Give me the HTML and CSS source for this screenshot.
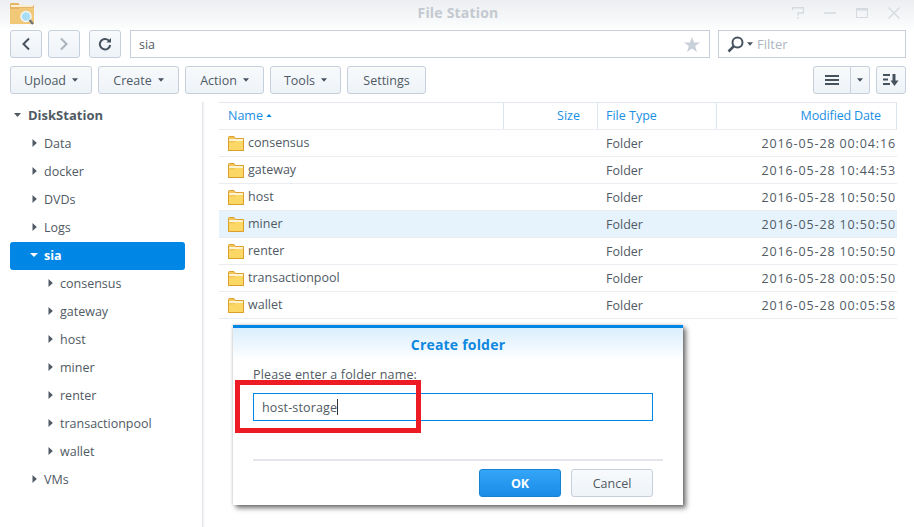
FILE: index.html
```html
<!DOCTYPE html>
<html lang="en">
<head>
<meta charset="utf-8">
<title>File Station</title>
<link rel="stylesheet" href="styles.css">
</head>
<body>
<svg class="defs" width="0" height="0" aria-hidden="true">
  <defs>
    <symbol id="folder" viewBox="0 0 16 15">
      <path d="M0.5 14.5V1.5Q0.5 0.5 1.5 0.5H6L7.5 2.5H15.5V14.5Z" fill="#f3c45a" stroke="#dc9f2a"/>
      <rect x="1" y="3" width="14" height="2" fill="#fdf3d3"/>
      <path d="M1 14V6.5L6 6.5L7.5 5H15V14Z" fill="#fbd765"/>
      <path d="M0.5 14.5H15.5" stroke="#dc9f2a"/>
    </symbol>
    <symbol id="caret" viewBox="0 0 7 4"><path d="M0 0H7L3.5 4Z" fill="currentColor"/></symbol>
    <symbol id="tri" viewBox="0 0 5 8"><path d="M0.500 0L4.800 4L0.500 8Z" fill="currentColor"/></symbol>
  </defs>
</svg>
<div class="app">
  <header class="titlebar">
    <svg class="app-icon" viewBox="0 0 24 24" width="24" height="24">
      <path d="M0 21V2Q0 1 1 1H8L10 3H23Q24 3 24 4V21Q24 22 23 22H1Q0 22 0 21Z" fill="#e5b565"/>
      <rect x="1" y="3" width="22" height="2" fill="#fbeed2"/>
      <path d="M0 21V7L9 7L10 6H24V21Q24 22 23 22H1Q0 22 0 21Z" fill="#f0c878"/>
      <circle cx="16" cy="14.500" r="5" fill="#a9def5" stroke="#f4f7f9" stroke-width="1.500"/>
      <path d="M19.500 18L23 22" stroke="#6b7480" stroke-width="2.200"/>
    </svg>
    <h1 class="title">File Station</h1>
    <div class="win-controls">
      <svg width="12" height="12" viewBox="0 0 12 12"><path d="M0.500 3V0.700H11.500V6H6V8.500M6 10V12" fill="none" stroke="#d5dae0" stroke-width="1.400"/></svg>
      <svg width="12" height="12" viewBox="0 0 12 12"><path d="M0 6H12" stroke="#d5dae0" stroke-width="1.500"/></svg>
      <svg width="12" height="12" viewBox="0 0 12 12"><rect x="0.500" y="1.500" width="11" height="9" fill="none" stroke="#d5dae0"/><rect x="0" y="1" width="12" height="2.500" fill="#d5dae0"/></svg>
      <svg width="12" height="12" viewBox="0 0 12 12"><path d="M0.500 0.500L11.500 11.500M11.500 0.500L0.500 11.500" stroke="#d5dae0" stroke-width="1.300"/></svg>
    </div>
  </header>

  <div class="toolbar nav-row">
    <button class="btn icon-btn"><svg width="10" height="14" viewBox="0 0 10 14"><path d="M8 1.500L2.500 7L8 12.500" fill="none" stroke="#47525f" stroke-width="2"/></svg></button>
    <button class="btn icon-btn"><svg width="10" height="14" viewBox="0 0 10 14"><path d="M2 1.500L7.500 7L2 12.500" fill="none" stroke="#aab2bb" stroke-width="2"/></svg></button>
    <button class="btn icon-btn refresh"><svg width="14" height="14" viewBox="0 0 14 14"><path d="M11.500 4.500A5.200 5.200 0 1 0 12.200 8" fill="none" stroke="#47525f" stroke-width="2"/><path d="M8.500 5.500H13V1Z" fill="#47525f"/></svg></button>
    <div class="path-field"><span>sia</span>
      <svg class="star" width="16" height="15" viewBox="0 0 16 15"><path d="M8 0L10 5.500H16L11.200 9L13 15L8 11.400L3 15L4.800 9L0 5.500H6Z" fill="#c8d0da"/></svg>
    </div>
    <div class="filter-field">
      <svg width="17" height="17" viewBox="0 0 17 17"><circle cx="10.500" cy="6.500" r="5" fill="none" stroke="#47525f" stroke-width="2"/><path d="M7 10L1.500 15.500" stroke="#47525f" stroke-width="2.500"/></svg>
      <svg class="c" width="6" height="4"><use href="#caret"/></svg>
      <span>Filter</span>
    </div>
  </div>

  <div class="toolbar action-row">
    <button class="btn txt upload">Upload<svg class="c" width="6" height="4"><use href="#caret"/></svg></button>
    <button class="btn txt create">Create<svg class="c" width="6" height="4"><use href="#caret"/></svg></button>
    <button class="btn txt action">Action<svg class="c" width="6" height="4"><use href="#caret"/></svg></button>
    <button class="btn txt tools">Tools<svg class="c" width="6" height="4"><use href="#caret"/></svg></button>
    <button class="btn txt settings">Settings</button>
    <div class="view-group">
      <button class="btn list-btn"><svg width="14" height="10" viewBox="0 0 14 10"><path d="M0 1H14M0 5H14M0 9H14" stroke="#47525f" stroke-width="2"/></svg></button>
      <button class="btn drop-btn"><svg class="c" width="6" height="4"><use href="#caret"/></svg></button>
    </div>
    <button class="btn sort-btn"><svg width="16" height="14" viewBox="0 0 16 14"><path d="M0 2H7M0 6.500H5M0 11H7" stroke="#47525f" stroke-width="2"/><path d="M11 1V8" stroke="#47525f" stroke-width="3"/><path d="M8 7.500H16L12 13Z" fill="#47525f" transform="translate(-0.500 0)"/></svg></button>
  </div>

  <div class="main">
    <nav class="tree">
      <div class="node root"><svg class="caret-i" width="7" height="4"><use href="#caret"/></svg>DiskStation</div>
      <div class="node l1"><svg class="tri" width="5" height="8"><use href="#tri"/></svg>Data</div>
      <div class="node l1"><svg class="tri" width="5" height="8"><use href="#tri"/></svg>docker</div>
      <div class="node l1"><svg class="tri" width="5" height="8"><use href="#tri"/></svg>DVDs</div>
      <div class="node l1"><svg class="tri" width="5" height="8"><use href="#tri"/></svg>Logs</div>
      <div class="node l1 selected"><svg class="caret-i" width="8" height="4" viewBox="0 0 7 4" preserveAspectRatio="none"><use href="#caret"/></svg>sia</div>
      <div class="node l2"><svg class="tri" width="5" height="8"><use href="#tri"/></svg>consensus</div>
      <div class="node l2"><svg class="tri" width="5" height="8"><use href="#tri"/></svg>gateway</div>
      <div class="node l2"><svg class="tri" width="5" height="8"><use href="#tri"/></svg>host</div>
      <div class="node l2"><svg class="tri" width="5" height="8"><use href="#tri"/></svg>miner</div>
      <div class="node l2"><svg class="tri" width="5" height="8"><use href="#tri"/></svg>renter</div>
      <div class="node l2"><svg class="tri" width="5" height="8"><use href="#tri"/></svg>transactionpool</div>
      <div class="node l2"><svg class="tri" width="5" height="8"><use href="#tri"/></svg>wallet</div>
      <div class="node l1"><svg class="tri" width="5" height="8"><use href="#tri"/></svg>VMs</div>
    </nav>
    <section class="grid">
      <div class="row head">
        <div class="col name">Name<svg class="c" width="6" height="3" viewBox="0 0 7 4"><path d="M0 4H7L3.500 0Z" fill="#0086e5"/></svg></div>
        <div class="col size">Size</div>
        <div class="col type">File Type</div>
        <div class="col date">Modified Date</div>
      </div>
      <div class="row"><div class="col name"><svg class="folder" width="16" height="15"><use href="#folder"/></svg>consensus</div><div class="col size"></div><div class="col type">Folder</div><div class="col date">2016-05-28 00:04:16</div></div>
      <div class="row"><div class="col name"><svg class="folder" width="16" height="15"><use href="#folder"/></svg>gateway</div><div class="col size"></div><div class="col type">Folder</div><div class="col date">2016-05-28 10:44:53</div></div>
      <div class="row"><div class="col name"><svg class="folder" width="16" height="15"><use href="#folder"/></svg>host</div><div class="col size"></div><div class="col type">Folder</div><div class="col date">2016-05-28 10:50:50</div></div>
      <div class="row hover"><div class="col name"><svg class="folder" width="16" height="15"><use href="#folder"/></svg>miner</div><div class="col size"></div><div class="col type">Folder</div><div class="col date">2016-05-28 10:50:50</div></div>
      <div class="row"><div class="col name"><svg class="folder" width="16" height="15"><use href="#folder"/></svg>renter</div><div class="col size"></div><div class="col type">Folder</div><div class="col date">2016-05-28 10:50:50</div></div>
      <div class="row"><div class="col name"><svg class="folder" width="16" height="15"><use href="#folder"/></svg>transactionpool</div><div class="col size"></div><div class="col type">Folder</div><div class="col date">2016-05-28 00:05:50</div></div>
      <div class="row"><div class="col name"><svg class="folder" width="16" height="15"><use href="#folder"/></svg>wallet</div><div class="col size"></div><div class="col type">Folder</div><div class="col date">2016-05-28 00:05:58</div></div>
    </section>
  </div>

  <div class="dialog">
    <div class="dialog-head">Create folder</div>
    <div class="dialog-body">
      <div class="label">Please enter a folder name:</div>
      <div class="input"><span>host-storage</span><i class="cursor"></i></div>
      <div class="sep"></div>
      <div class="dialog-actions">
        <button class="dbtn ok">OK</button>
        <button class="dbtn cancel">Cancel</button>
      </div>
    </div>
  </div>
  <div class="annotation"></div>
</div>
</body>
</html>
```

FILE: styles.css
```css
* { box-sizing: border-box; }
html, body { margin: 0; padding: 0; height: 100%; background: #fff; overflow: hidden; }
body { font-family: "Open Sans", "DejaVu Sans", sans-serif; font-size: 12px; color: #505a64; }
.defs { position: absolute; }
.app { position: relative; width: 914px; height: 527px; overflow: hidden; background: #fff; }

.titlebar { display: flex; align-items: center; height: 30px; padding: 0 14px 0 10px; background: linear-gradient(#eceef1, #fbfcfc 90%, #fff); position: relative; }
.app-icon { flex: none; margin-top: -2px; }
.title { position: absolute; left: 2px; right: 0; top: 5px; margin: 0; text-align: center; font-size: 14px; line-height: 16px; letter-spacing: 0.200px; font-weight: 700; color: #c3c9d0; }
.win-controls { margin-left: auto; display: flex; align-items: center; gap: 20px; margin-top: -4px; }

.toolbar { display: flex; align-items: stretch; height: 28px; padding: 0 8px 0 10px; }
.nav-row { gap: 6px; }
.action-row { margin-top: 8px; gap: 6px; }

.btn { margin: 0; padding: 0; height: 28px; border: 1px solid #c5d0dc; border-radius: 3px; background: linear-gradient(#f8fafc, #eef3f8); font: inherit; font-size: 12.500px; color: #505a64; display: flex; align-items: center; justify-content: center; }
.icon-btn { width: 32px; }
.refresh { margin-left: 3px; }
.path-field { width: 580px; margin-left: 3px; height: 28px; border: 1px solid #c5d0dc; background: #fff; display: flex; align-items: center; justify-content: space-between; padding: 0 9px 0 8px; font-size: 12.500px; }
.filter-field { width: 188px; margin-left: 2px; height: 28px; border: 1px solid #c5d0dc; background: #fff; display: flex; align-items: center; padding: 0 0 0 8px; color: #aeb6bf; font-size: 13px; }
.filter-field .c { margin: 0 4px 0 3px; color: #47525f; }
.c { flex: none; }
.txt .c { margin-left: 6px; color: #47525f; }
.upload { width: 82px; }
.create { width: 81px; }
.action { width: 79px; }
.tools { width: 71px; }
.settings { width: 79px; }
.view-group { display: flex; margin-left: auto; }
.list-btn { width: 38px; border-radius: 3px 0 0 3px; }
.drop-btn { width: 19px; border-left: 0; border-radius: 0 3px 3px 0; color: #47525f; }
.sort-btn { width: 30px; }

.main { display: flex; margin-top: 8px; height: 425px; }
.tree { width: 203px; flex: none; border-right: 1px solid #e3e6ea; box-shadow: 1px 0 1px #f0f2f4; padding: 0 17px 0 10px; }
.node { display: flex; align-items: center; height: 28px; padding-bottom: 2px; font-size: 12.500px; white-space: nowrap; }
.root { font-weight: 700; padding-left: 4px; font-size: 13px; }
.root .caret-i { margin-right: 7px; color: #505a64; }
.l1 { padding-left: 22px; }
.l2 { padding-left: 38px; }
.tri { flex: none; margin-right: 7px; color: #505a64; }
.selected { background: #0086e5; color: #fff; font-weight: 700; border-radius: 3px; padding-left: 20px; }
.selected .caret-i { margin-right: 6px; color: #fff; }

.grid { margin-left: 16px; width: 678px; flex: none; border-top: 1px solid #e3e8ee; align-self: flex-start; }
.row { display: flex; height: 27px; border-bottom: 1px solid #e9ecf0; font-size: 12.500px; align-items: center; }
.head { color: #1a8fe3; }
.head .col { height: 100%; border-right: 1px solid #dde5ee; padding-bottom: 2px; }
.col { display: flex; align-items: center; height: 100%; white-space: nowrap; }
.name { width: 285px; padding-left: 9px; }
.row .name { padding-bottom: 2px; }
.name .c { margin-left: 3px; }
.size { width: 94px; justify-content: flex-end; padding-right: 17px; }
.type { width: 119px; padding-left: 8px; }
.date { width: 180px; justify-content: flex-end; padding-right: 1px; letter-spacing: 0.870px; }
.head .date { letter-spacing: -0.150px; padding-right: 15px; }
.hover { background: #e6f3fd; }
.folder { flex: none; margin-right: 4px; margin-top: 2px; }

.dialog { position: absolute; left: 233px; top: 325px; width: 450px; height: 180px; background: #fff; border-top: 3px solid #0086e5; box-shadow: 3px 3px 5px rgba(0,0,0,.55), 0 0 3px rgba(0,0,0,.2); }
.dialog-head { height: 32px; background: linear-gradient(#d9eefc, #fff); text-align: center; font-weight: 700; font-size: 14px; letter-spacing: 0.200px; line-height: 33px; color: #0f88e0; }
.dialog-body { padding: 0 30px 0 20px; }
.label { margin-top: 6px; line-height: 18px; font-size: 12.500px; letter-spacing: 0.150px; }
.input { margin-top: 9px; width: 400px; height: 28px; border: 1px solid #0086e5; padding-left: 8px; display: flex; align-items: center; font-size: 12.500px; letter-spacing: 0.150px; }
.cursor { width: 1px; height: 16px; background: #333; }
.sep { margin-top: 38px; width: 410px; height: 2px; background: #e3e5e8; }
.dialog-actions { display: flex; justify-content: flex-end; gap: 10px; margin-top: 8px; }
.dbtn { width: 82px; height: 28px; margin: 0; padding: 0; border-radius: 3px; font: inherit; font-size: 12.500px; }
.ok { border: 1px solid #1483d4; background: linear-gradient(#35a5f8, #1a8ce6); color: #fff; font-weight: 700; }
.cancel { border: 1px solid #c5d0dc; background: linear-gradient(#f8fafc, #eef3f8); color: #505a64; }

.annotation { position: absolute; left: 235px; top: 380px; width: 186px; height: 53px; border: 5px solid #ed1c24; }
```
